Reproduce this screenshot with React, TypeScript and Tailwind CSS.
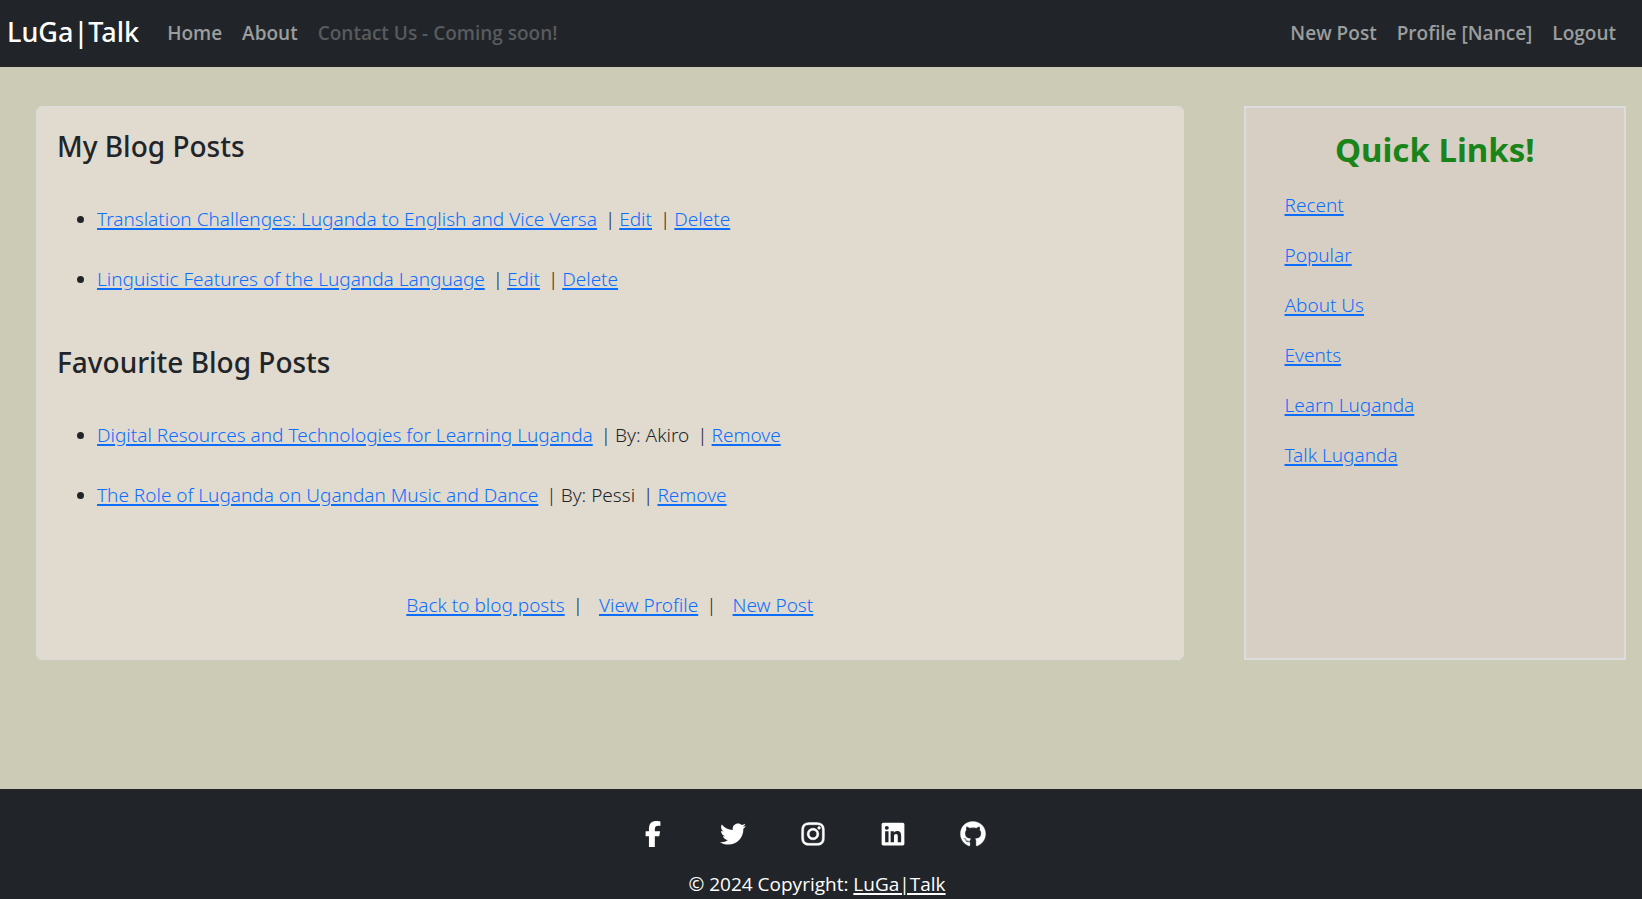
import React from "react";
import { FaFacebookF, FaTwitter, FaInstagram, FaLinkedin, FaGithub } from "react-icons/fa6";

const link = "text-[#0d6efd] underline decoration-2 underline-offset-2";

const myPosts = [
  "Translation Challenges: Luganda to English and Vice Versa",
  "Linguistic Features of the Luganda Language",
];

const favourites = [
  { title: "Digital Resources and Technologies for Learning Luganda", author: "Akiro" },
  { title: "The Role of Luganda on Ugandan Music and Dance", author: "Pessi" },
];

const quickLinks = ["Recent", "Popular", "About Us", "Events", "Learn Luganda", "Talk Luganda"];

const socials = [
  { name: "Facebook", icon: FaFacebookF, outline: 0 },
  { name: "Twitter", icon: FaTwitter, outline: 0 },
  { name: "Instagram", icon: FaInstagram, outline: 10 },
  { name: "LinkedIn", icon: FaLinkedin, outline: 0 },
  { name: "GitHub", icon: FaGithub, outline: 6 },
];

function Sep() {
  return <span className="mr-1 ml-2">|</span>;
}

export default function App() {
  return (
    <div className="flex min-h-screen flex-col bg-[#cccbb5] font-['Noto_Sans','Open_Sans',sans-serif] text-[19px] leading-[30px] font-light text-[#212529]">
      <nav className="flex h-[67px] items-center bg-[#212529] pr-[26px] pb-0.5 pl-[7px] font-['Open_Sans','Noto_Sans',sans-serif] font-semibold text-[#9b9d9e]">
        <a href="#" className="mr-7 pb-0.5 font-['Noto_Sans','Open_Sans',sans-serif] text-[27px] font-medium text-white">LuGa|Talk</a>
        <div className="flex flex-1 gap-5">
          <a href="#">Home</a>
          <a href="#">About</a>
          <a href="#" aria-disabled="true" className="text-[#585b5e]">Contact Us - Coming soon!</a>
        </div>
        <div className="flex gap-5">
          <a href="#">New Post</a>
          <a href="#">Profile [Nance]</a>
          <a href="#">Logout</a>
        </div>
      </nav>

      <main className="flex-1 pt-[39px] pr-4 pl-9">
        <div className="grid grid-cols-[3fr_1fr] gap-[60px]">
          <section className="rounded-md border border-[#dcdcdc] bg-[#e0dacf] px-5 pt-[21px] pb-[39px]">
            <h2 className="text-[28px] leading-9 font-medium">My Blog Posts</h2>
            <ul className="mt-10 flex list-disc flex-col gap-[30px] pl-10">
              {myPosts.map((title) => (
                <li key={title}>
                  <a href="#" className={link}>{title}</a>
                  <Sep />
                  <a href="#" className={link}>Edit</a>
                  <Sep />
                  <a href="#" className={link}>Delete</a>
                </li>
              ))}
            </ul>
            <h2 className="mt-[50px] text-[28px] leading-9 font-medium">Favourite Blog Posts</h2>
            <ul className="mt-10 flex list-disc flex-col gap-[30px] pl-10">
              {favourites.map((post) => (
                <li key={post.title}>
                  <a href="#" className={link}>{post.title}</a>
                  <Sep />
                  By: {post.author}
                  <Sep />
                  <a href="#" className={link}>Remove</a>
                </li>
              ))}
            </ul>
            <p className="mt-20 text-center">
              <a href="#" className={link}>Back to blog posts</a>
              <span className="mr-4 ml-2">|</span>
              <a href="#" className={link}>View Profile</a>
              <span className="mr-4 ml-2">|</span>
              <a href="#" className={link}>New Post</a>
            </p>
          </section>

          <aside className="border-2 border-[#dcdcdc] bg-[#d7cfc4] pt-[22px]">
            <h2 className="text-center text-[33px] leading-10 font-bold text-[#198419]">Quick Links!</h2>
            <ul className="mt-5 flex flex-col gap-5 pl-[39px]">
              {quickLinks.map((label) => (
                <li key={label}>
                  <a href="#" className={link}>{label}</a>
                </li>
              ))}
            </ul>
          </aside>
        </div>
      </main>

      <footer className="flex flex-col items-center bg-[#212529] pt-8 pr-2 font-normal text-white">
        <div className="flex gap-[54px] pr-2">
          {socials.map(({ name, icon: Icon, outline }) => (
            <a key={name} href="#" aria-label={name}>
              <Icon size={26} strokeWidth={outline} />
            </a>
          ))}
        </div>
        <p className="mt-[22px] font-['Open_Sans','Noto_Sans',sans-serif]">
          © 2024 Copyright: <a href="#" className="underline decoration-2 underline-offset-2">LuGa|Talk</a>
        </p>
      </footer>
    </div>
  );
}
